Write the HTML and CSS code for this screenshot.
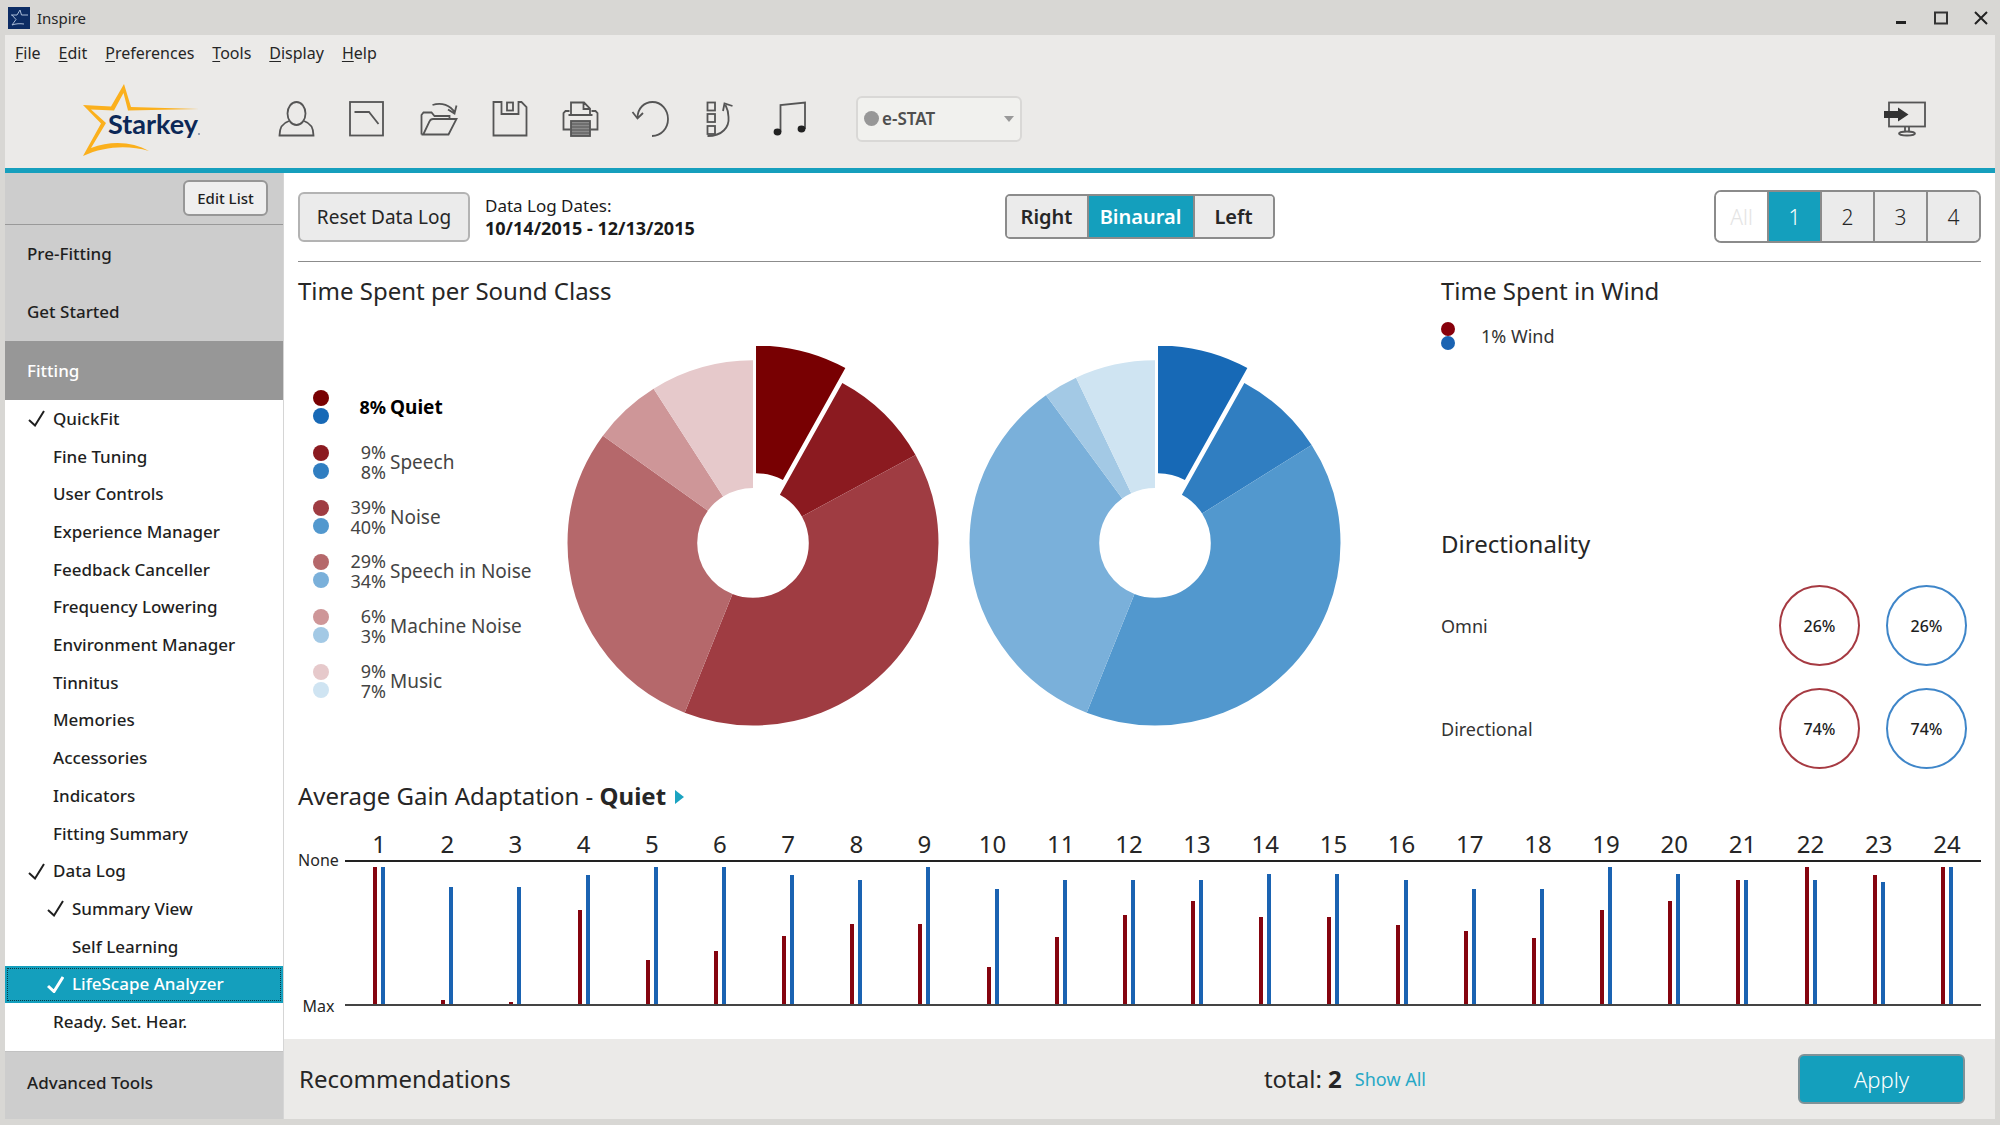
FILE: index.html
```html
<!DOCTYPE html>
<html lang="en">
<head>
<meta charset="utf-8">
<title>Inspire</title>
<link rel="stylesheet" href="styles.css">
</head>
<body>
<div class="window">
  <header class="titlebar">
    <svg class="app-icon" viewBox="0 0 22 22" aria-hidden="true"><rect width="22" height="22" fill="#0c2c64"/><path d="M3 8h6l3-5 1.500 5H20M4 8l4 4.500L4 18c4-1.500 8-1.500 12-1" fill="none" stroke="#a9bcd8" stroke-width="1"/></svg>
    <span class="app-name">Inspire</span>
    <div class="window-controls">
      <button type="button" aria-label="Minimize"><svg viewBox="0 0 16 16"><path d="M3 12.500h10" stroke="#222" stroke-width="3"/></svg></button>
      <button type="button" aria-label="Maximize"><svg viewBox="0 0 16 16"><path d="M1 2.500h14M2 2v12M14 2v12M1 13.500h14" stroke="#333" stroke-width="2"/></svg></button>
      <button type="button" aria-label="Close"><svg viewBox="0 0 16 16"><path d="M2 2l12 12M14 2L2 14" stroke="#222" stroke-width="2"/></svg></button>
    </div>
  </header>

  <nav class="menubar" aria-label="Main menu">
    <a href="#"><u>F</u>ile</a>
    <a href="#"><u>E</u>dit</a>
    <a href="#"><u>P</u>references</a>
    <a href="#"><u>T</u>ools</a>
    <a href="#"><u>D</u>isplay</a>
    <a href="#"><u>H</u>elp</a>
  </nav>

  <div class="toolbar">
    <svg class="logo" viewBox="0 0 120 76" role="img" aria-label="Starkey">
      <path d="M3 24L31 25.500 44 3l7 23 68 2-71 1.500L43.500 12 34 29.500 11 28.500 26 42 11 67C32 59 53 61 69 70 48 64 25 65 3 75L21 42.500Z" fill="#fbb01c"/>
      <text x="28" y="53" class="logo-text">Starkey</text>
      <circle cx="119" cy="53" r="1" fill="#7c8aa6"/>
    </svg>
    <div class="tools">
      <button type="button" aria-label="Patient"><svg class="ico" viewBox="0 0 40 36"><ellipse cx="20" cy="12.500" rx="9" ry="11.500"/><path d="M12.500 20C6 22 3 27 3 34.500h34C37 27 34 22 27.500 20"/></svg></button>
      <button type="button" aria-label="Audiogram"><svg class="ico" viewBox="0 0 40 36"><rect x="2.500" y="1" width="33" height="33.500"/><path d="M7 11h14.500L31 23"/></svg></button>
      <button type="button" aria-label="Open"><svg class="ico" viewBox="0 0 40 36"><path d="M3 33.500V14l2-2.500h8l3 3.500h15v4M3 33.500h27L38 18H14.500Q12 18 11 20.500L5 33M14 4c9-3 18 0 22.500 8M29.500 8.500l6.500 4 2-8"/></svg></button>
      <button type="button" aria-label="Save"><svg class="ico" viewBox="0 0 40 36"><path d="M4 1h8v12h17V1h3l5 5v28.500H4Z"/><rect x="17.500" y="1.500" width="6" height="8"/></svg></button>
      <button type="button" aria-label="Print"><svg class="ico" viewBox="0 0 40 36"><path d="M10.500 13V1.500h13l6 6V13M23 2v6h6M10 28.500H3V12l2-2h4M30 28.500h7V12l-2-2h-4M8 14h24"/><rect x="10.500" y="20" width="19" height="15" fill="#8b8b8b"/><path d="M11 23h18M11 26h18M11 29h18M11 32h18" stroke-width="1"/></svg></button>
      <button type="button" aria-label="Undo"><svg class="ico" viewBox="2 0 40 36"><path d="M8 17C8 7 15 1 23 1c9 0 15.500 8 15.500 17S32 35 22.500 35M3 11l5 6.500 5.500-5.500"/></svg></button>
      <button type="button" aria-label="Reorder"><svg class="ico" viewBox="2 0 40 36"><rect x="7" y="1.500" width="7.500" height="8"/><rect x="7" y="13" width="7.500" height="8"/><rect x="7" y="25" width="7.500" height="8"/><path d="M7 35C22 35 29 26 28 16q0-6-3-12M22.500 10l1.500-7.500L32 5"/></svg></button>
      <button type="button" aria-label="Sounds"><svg class="ico" viewBox="3 0 40 36"><path d="M10 31V4L34.500 1.500V28"/><ellipse cx="7" cy="31" rx="3" ry="2.500" fill="#222" stroke="#222"/><ellipse cx="31" cy="28" rx="3" ry="2.500" fill="#222" stroke="#222"/></svg></button>
    </div>
    <div class="mode">
      <span class="mode-dot"></span>
      <select class="mode-select" aria-label="Fitting formula"><option>e-STAT</option></select>
      <span class="mode-arrow"></span>
    </div>
    <button type="button" class="screen-button" aria-label="Send to screen"><svg class="ico" viewBox="0 0 44 36"><rect x="6" y="1.500" width="36" height="24"/><path d="M22 26v5M26 26v5" /><ellipse cx="24" cy="32.500" rx="8" ry="2"/><path d="M1 10h14V6.500l10.500 7L15 20.500V17H1Z" fill="#333" stroke="none"/></svg></button>
  </div>

  <div class="body">
    <nav class="sidebar" aria-label="Fitting steps">
      <div class="edit-row"><button type="button" class="edit-button">Edit List</button></div>
      <a href="#" class="group">Pre-Fitting</a>
      <a href="#" class="group">Get Started</a>
      <a href="#" class="group open">Fitting</a>
      <ul class="steps">
        <li><a href="#"><svg class="tick" viewBox="0 0 17 17"><path d="M1 10l6 5.500L16 1"/></svg>QuickFit</a></li>
        <li><a href="#"><span class="tick"></span>Fine Tuning</a></li>
        <li><a href="#"><span class="tick"></span>User Controls</a></li>
        <li><a href="#"><span class="tick"></span>Experience Manager</a></li>
        <li><a href="#"><span class="tick"></span>Feedback Canceller</a></li>
        <li><a href="#"><span class="tick"></span>Frequency Lowering</a></li>
        <li><a href="#"><span class="tick"></span>Environment Manager</a></li>
        <li><a href="#"><span class="tick"></span>Tinnitus</a></li>
        <li><a href="#"><span class="tick"></span>Memories</a></li>
        <li><a href="#"><span class="tick"></span>Accessories</a></li>
        <li><a href="#"><span class="tick"></span>Indicators</a></li>
        <li><a href="#"><span class="tick"></span>Fitting Summary</a></li>
        <li><a href="#"><svg class="tick" viewBox="0 0 17 17"><path d="M1 10l6 5.500L16 1"/></svg>Data Log</a></li>
        <li class="sub"><a href="#"><svg class="tick" viewBox="0 0 17 17"><path d="M1 10l6 5.500L16 1"/></svg>Summary View</a></li>
        <li class="sub"><a href="#"><span class="tick"></span>Self Learning</a></li>
        <li class="sub current"><a href="#" aria-current="page"><svg class="tick" viewBox="0 0 17 17"><path d="M1 10l6 5.500L16 1"/></svg>LifeScape Analyzer</a></li>
        <li><a href="#"><span class="tick"></span>Ready. Set. Hear.</a></li>
      </ul>
      <a href="#" class="group last">Advanced Tools</a>
    </nav>

    <main class="main">
      <div class="main-head">
        <div class="log">
          <button type="button" class="reset-button">Reset Data Log</button>
          <p class="dates">Data Log Dates:<br><strong>10/14/2015 - 12/13/2015</strong></p>
        </div>
        <div class="sides" role="group" aria-label="Side">
          <button type="button">Right</button>
          <button type="button" class="on" aria-pressed="true">Binaural</button>
          <button type="button">Left</button>
        </div>
        <div class="memories" role="group" aria-label="Memory">
          <button type="button" disabled>All</button>
          <button type="button" class="on" aria-pressed="true">1</button>
          <button type="button">2</button>
          <button type="button">3</button>
          <button type="button">4</button>
        </div>
      </div>

      <div class="overview">
        <section>
          <h2>Time Spent per Sound Class</h2>
          <div class="classes">
            <ul class="legend">
              <li class="selected"><span class="dots"><i class="r1"></i><i class="b1"></i></span><span class="pct">8%</span><span>Quiet</span></li>
              <li><span class="dots"><i class="r2"></i><i class="b2"></i></span><span class="pct">9%<br>8%</span><span>Speech</span></li>
              <li><span class="dots"><i class="r3"></i><i class="b3"></i></span><span class="pct">39%<br>40%</span><span>Noise</span></li>
              <li><span class="dots"><i class="r4"></i><i class="b4"></i></span><span class="pct">29%<br>34%</span><span>Speech in Noise</span></li>
              <li><span class="dots"><i class="r5"></i><i class="b5"></i></span><span class="pct">6%<br>3%</span><span>Machine Noise</span></li>
              <li><span class="dots"><i class="r6"></i><i class="b6"></i></span><span class="pct">9%<br>7%</span><span>Music</span></li>
            </ul>
            <svg class="donut" viewBox="0 0 370 384" preserveAspectRatio="none" role="img" aria-label="Right ear sound classes">
              <g transform="translate(185 199) rotate(-90)">
                <circle class="r1" r="120" pathLength="100" stroke-dasharray="8 92" transform="translate(15 3)"/>
                <circle class="r2" r="120" pathLength="100" stroke-dasharray="9 91" stroke-dashoffset="-8"/>
                <circle class="r3" r="120" pathLength="100" stroke-dasharray="39 61" stroke-dashoffset="-17"/>
                <circle class="r4" r="120" pathLength="100" stroke-dasharray="29 71" stroke-dashoffset="-56"/>
                <circle class="r5" r="120" pathLength="100" stroke-dasharray="6 94" stroke-dashoffset="-85"/>
                <circle class="r6" r="120" pathLength="100" stroke-dasharray="9 91" stroke-dashoffset="-91"/>
              </g>
            </svg>
            <svg class="donut" viewBox="0 0 370 384" preserveAspectRatio="none" role="img" aria-label="Left ear sound classes">
              <g transform="translate(185 199) rotate(-90)">
                <circle class="b1" r="120" pathLength="100" stroke-dasharray="8 92" transform="translate(15 3)"/>
                <circle class="b2" r="120" pathLength="100" stroke-dasharray="8 92" stroke-dashoffset="-8"/>
                <circle class="b3" r="120" pathLength="100" stroke-dasharray="40 60" stroke-dashoffset="-16"/>
                <circle class="b4" r="120" pathLength="100" stroke-dasharray="34 66" stroke-dashoffset="-56"/>
                <circle class="b5" r="120" pathLength="100" stroke-dasharray="3 97" stroke-dashoffset="-90"/>
                <circle class="b6" r="120" pathLength="100" stroke-dasharray="7 93" stroke-dashoffset="-93"/>
              </g>
            </svg>
          </div>
        </section>
        <div class="side-stats">
          <section class="wind-section">
            <h2>Time Spent in Wind</h2>
            <p class="wind"><span class="dots"><i class="rw"></i><i class="bw"></i></span>1% Wind</p>
          </section>
          <section>
            <h2>Directionality</h2>
            <div class="directions">
              <div class="direction"><span>Omni</span><b class="ring right">26%</b><b class="ring left">26%</b></div>
              <div class="direction"><span>Directional</span><b class="ring right">74%</b><b class="ring left">74%</b></div>
            </div>
          </section>
        </div>
      </div>

      <section class="gain">
        <h2>Average Gain Adaptation - <strong>Quiet</strong><span class="more"></span></h2>
        <div class="gain-chart">
          <div class="axis"><span>None</span><span>Max</span></div>
          <div class="bands">
            <span>1</span><span>2</span><span>3</span><span>4</span><span>5</span><span>6</span><span>7</span><span>8</span><span>9</span><span>10</span><span>11</span><span>12</span><span>13</span><span>14</span><span>15</span><span>16</span><span>17</span><span>18</span><span>19</span><span>20</span><span>21</span><span>22</span><span>23</span><span>24</span>
          </div>
          <div class="plot">
            <div><i style="height:137px"></i><i style="height:137px"></i></div>
            <div><i style="height:4px"></i><i style="height:117px"></i></div>
            <div><i style="height:2px"></i><i style="height:117px"></i></div>
            <div><i style="height:94px"></i><i style="height:129px"></i></div>
            <div><i style="height:44px"></i><i style="height:137px"></i></div>
            <div><i style="height:53px"></i><i style="height:137px"></i></div>
            <div><i style="height:68px"></i><i style="height:129px"></i></div>
            <div><i style="height:80px"></i><i style="height:124px"></i></div>
            <div><i style="height:80px"></i><i style="height:137px"></i></div>
            <div><i style="height:37px"></i><i style="height:115px"></i></div>
            <div><i style="height:67px"></i><i style="height:124px"></i></div>
            <div><i style="height:89px"></i><i style="height:124px"></i></div>
            <div><i style="height:103px"></i><i style="height:124px"></i></div>
            <div><i style="height:87px"></i><i style="height:130px"></i></div>
            <div><i style="height:87px"></i><i style="height:130px"></i></div>
            <div><i style="height:79px"></i><i style="height:124px"></i></div>
            <div><i style="height:73px"></i><i style="height:115px"></i></div>
            <div><i style="height:66px"></i><i style="height:115px"></i></div>
            <div><i style="height:94px"></i><i style="height:137px"></i></div>
            <div><i style="height:103px"></i><i style="height:130px"></i></div>
            <div><i style="height:124px"></i><i style="height:124px"></i></div>
            <div><i style="height:137px"></i><i style="height:124px"></i></div>
            <div><i style="height:129px"></i><i style="height:122px"></i></div>
            <div><i style="height:137px"></i><i style="height:137px"></i></div>
          </div>
        </div>
      </section>

      <footer class="footer">
        <h2>Recommendations</h2>
        <p class="total">total: <strong>2</strong><a href="#">Show All</a></p>
        <button type="button" class="apply">Apply</button>
      </footer>
    </main>
  </div>
</div>
</body>
</html>
```
FILE: styles.css
```css
* { box-sizing: border-box; }
body, h2, p, ul { margin: 0; padding: 0; }
ul { list-style: none; }
body {
  background: #d8d7d4;
  color: #262626;
  font: 17px/20px "Noto Sans", "Open Sans", sans-serif;
}
button { font-family: inherit; color: inherit; padding: 0; cursor: pointer; }
a { color: inherit; text-decoration: none; }
h2 { font-size: 24px; line-height: 32px; font-weight: 400; }

.window {
  min-height: 100vh;
  display: flex;
  flex-direction: column;
  padding: 0 5px 6px;
}

/* Title bar and menus */
.titlebar { display: flex; align-items: center; height: 35px; padding: 0 6px 0 3px; }
.app-icon { width: 22px; height: 22px; margin-right: 7px; }
.app-name { font-size: 15px; }
.window-controls { display: flex; gap: 24px; margin-left: auto; }
.window-controls button { width: 16px; height: 16px; border: 0; background: none; }
.window-controls svg { display: block; width: 16px; height: 16px; }
.menubar {
  display: flex;
  gap: 18px;
  padding: 8px 10px;
  background: #ebeae8;
  font-size: 16px;
}
.menubar u { text-underline-offset: 2px; }

/* Toolbar */
.toolbar {
  display: flex;
  align-items: center;
  height: 102px;
  padding: 0 68px 2px 75px;
  background: #ebeae8;
  border-bottom: 5px solid #169fbd;
}
.logo { width: 120px; height: 76px; }
.logo-text { font: 700 27px "Lato", sans-serif; fill: #0c2857; }
.tools { display: flex; gap: 30px; margin-left: 76px; }
.tools button, .screen-button { border: 0; background: none; display: block; }
.ico { display: block; width: 40px; height: 36px; fill: none; stroke: #555; stroke-width: 1.8; }
.tools .ico { width: 41px; }
.screen-button { margin-left: auto; }
.screen-button .ico { width: 44px; }
.mode {
  display: flex;
  align-items: center;
  width: 166px;
  height: 46px;
  margin-left: 42px;
  padding: 0 6px;
  border: 2px solid #d9d8d6;
  border-radius: 6px;
  background: #f1f1ee;
}
.mode-dot { width: 15px; height: 15px; border-radius: 50%; background: #979797; }
.mode-select {
  flex: 1;
  appearance: none;
  border: 0;
  padding: 0 3px;
  background: none;
  color: #4f4f4f;
  font: 600 17px/24px "Noto Sans", sans-serif;
}
.mode-arrow { border: 5px solid transparent; border-top: 6px solid #999; border-bottom: 0; }

.body { flex: 1; display: flex; }

/* Sidebar */
.sidebar {
  flex: 0 0 279px;
  display: flex;
  flex-direction: column;
  background: #fff;
  border-right: 1px solid #d5d5d5;
  color: #1f1f1f;
  font-size: 17px;
  font-weight: 500;
}
.edit-row {
  display: flex;
  justify-content: flex-end;
  padding: 7px 15px 8px;
  background: #cdcdcd;
  border-bottom: 1px solid #999;
}
.edit-button {
  width: 85px;
  height: 36px;
  border: 2px solid #979797;
  border-radius: 6px;
  background: #efefef;
  font-size: 15px;
  font-weight: 500;
}
.group { padding: 19px 22px; line-height: 20px; background: #cdcdcd; }
.group.open { padding: 20px 22px 19px; background: #979797; color: #fff; }
.group.last { padding: 21px 22px 26px; border-top: 1px solid #c2c2c2; }
.steps { flex: 1; display: flex; flex-direction: column; padding-bottom: 10px; }
.steps li { flex: 1; display: flex; }
.steps a { flex: 1; display: flex; align-items: center; gap: 8px; padding-left: 23px; }
.steps .sub a { padding-left: 42px; }
.tick { width: 17px; height: 17px; fill: none; stroke: currentColor; stroke-width: 2; }
.current { background: #149fbd; color: #fff; }
.current a { outline: 1px dotted #0b3944; outline-offset: -3px; }
.current .tick { stroke-width: 3; }

/* Main area */
.main { flex: 1; min-width: 0; display: flex; flex-direction: column; background: #fff; }
.main-head {
  display: grid;
  grid-template-columns: 1fr auto 1fr;
  align-items: center;
  height: 89px;
  margin: 0 14px;
  padding-bottom: 1px;
  border-bottom: 1px solid #8c8c8c;
}
.log { display: flex; align-items: center; gap: 15px; }
.reset-button {
  width: 172px;
  height: 50px;
  border: 2px solid #b3b3b3;
  border-radius: 6px;
  background: #ebebeb;
  font-size: 19px;
}
.dates { line-height: 23px; color: #1a1a1a; }
.dates strong { font-size: 18px; }
.sides, .memories { display: flex; border: 2px solid #8b8b8b; border-radius: 5px; overflow: hidden; }
.memories { justify-self: end; border-radius: 7px; }
.sides button, .memories button {
  border: 0;
  border-left: 2px solid #8b8b8b;
  background: #ebebeb;
  font-size: 20px;
}
.sides button { width: 80px; height: 41px; font-weight: 600; }
.sides button:nth-child(2) { width: 106px; }
.memories button { width: 53px; height: 49px; font-size: 21px; font-weight: 300; }
.memories button:disabled { width: 51px; background: #fff; color: #e4e4e4; }
.sides button:first-child, .memories button:first-child { border-left: 0; }
.sides .on, .memories .on { background: #149fbd; color: #fff; }

.overview { flex: 1; display: grid; grid-template-columns: 1fr 540px; padding: 13px 14px 0; }
.classes { display: flex; align-items: flex-start; margin-top: 39px; }
.legend {
  display: grid;
  grid-auto-rows: 1fr;
  width: 254px;
  height: 328px;
  margin: 34px 0 0 15px;
  color: #444;
  font-size: 19px;
}
.legend li { display: grid; grid-template-columns: 16px 53px 1fr; align-items: center; column-gap: 4px; }
.legend .selected { color: #000; font-weight: 700; }
.pct { text-align: right; font-size: 18px; line-height: 20px; }
.dots { display: grid; gap: 2px; }
.dots i { width: 16px; height: 16px; border-radius: 50%; }
.donut { flex: none; width: 372px; height: 380px; margin-right: 30px; }
.donut circle { fill: none; stroke-width: 129; }

.r1 { background: #780002; stroke: #780002; }
.r2 { background: #8b1a20; stroke: #8b1a20; }
.r3 { background: #9f3c42; stroke: #9f3c42; }
.r4 { background: #b5686b; stroke: #b5686b; }
.r5 { background: #ce9698; stroke: #ce9698; }
.r6 { background: #e6c9cb; stroke: #e6c9cb; }
.b1 { background: #1769b6; stroke: #1769b6; }
.b2 { background: #307ec1; stroke: #307ec1; }
.b3 { background: #5298ce; stroke: #5298ce; }
.b4 { background: #7ab0da; stroke: #7ab0da; }
.b5 { background: #a3c9e5; stroke: #a3c9e5; }
.b6 { background: #cfe4f2; stroke: #cfe4f2; }
.rw { background: #87000b; }
.bw { background: #1a63b2; }

.side-stats { display: flex; flex-direction: column; }
.wind-section { height: 253px; }
.wind { display: flex; align-items: center; gap: 26px; margin-top: 15px; font-size: 18px; color: #333; }
.wind .dots { gap: 0; }
.wind .dots i { width: 14px; height: 14px; }
.directions { display: grid; gap: 22px; margin-top: 25px; padding-right: 14px; }
.direction { display: grid; grid-template-columns: 1fr 81px 81px; column-gap: 26px; align-items: center; font-size: 18px; color: #333; }
.ring {
  display: grid;
  place-items: center;
  height: 81px;
  border: 2px solid;
  border-radius: 50%;
  font-size: 16px;
  font-weight: 500;
  color: #1f1f1f;
}
.ring.right { border-color: #a63a42; }
.ring.left { border-color: #3f86c9; }

/* Gain chart */
.gain { padding: 0 14px 33px; }
.more {
  display: inline-block;
  margin-left: 9px;
  border: 7px solid transparent;
  border-left: 9px solid #1ba3c1;
  border-right: 0;
  vertical-align: 1px;
}
.gain-chart { display: grid; grid-template-columns: 47px 1fr; grid-template-rows: 30px auto; margin-top: 18px; }
.axis {
  grid-row: 1 / 3;
  display: flex;
  flex-direction: column;
  justify-content: space-between;
  width: 41px;
  margin: 20px 0 -10px;
  font-size: 16px;
  text-align: center;
}
.bands, .plot { display: grid; grid-template-columns: repeat(24, 1fr); }
.bands { font-size: 24px; line-height: 28px; text-align: center; }
.plot { grid-column: 2; height: 146px; border-top: 2px solid #222; border-bottom: 2px solid #444; }
.plot div { display: flex; justify-content: center; align-items: flex-end; gap: 4px; }
.plot i { width: 4px; background: #85040f; }
.plot i + i { background: #1a63b2; }

/* Recommendations */
.footer { display: flex; align-items: center; height: 80px; padding: 0 30px 0 15px; background: #ebeae8; }
.footer h2 { flex: 1; }
.total { display: flex; align-items: center; margin-right: 372px; font-size: 24px; white-space: pre; }
.total a { margin-left: 13px; font-size: 18px; color: #27a8c6; }
.apply {
  width: 167px;
  height: 50px;
  border: 2px solid #7f9298;
  border-radius: 6px;
  background: #149fbd;
  color: #fff;
  font-size: 22px;
  font-weight: 300;
}
```
